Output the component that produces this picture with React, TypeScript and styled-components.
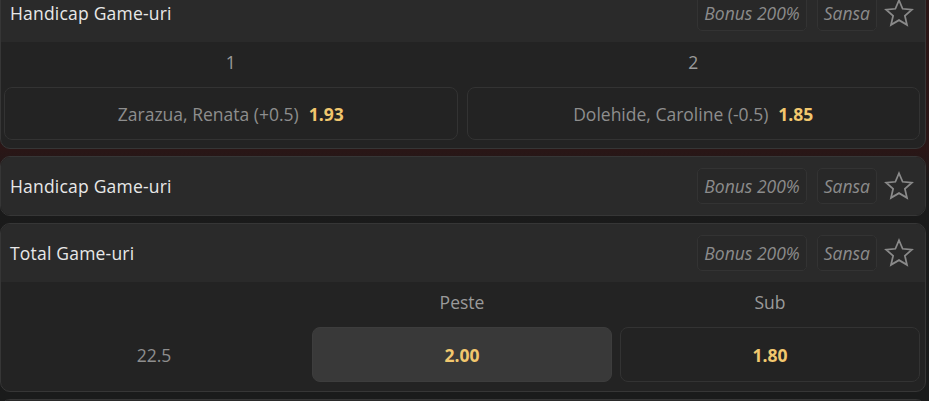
import React from "react";
import styled, { createGlobalStyle } from "styled-components";

const Global = createGlobalStyle`
  html, body { margin: 0; padding: 0; }
  body {
    background: linear-gradient(180deg, #2a1515 0px, #2a1616 150px, #1a1a1a 185px, #1a1b1b 100%);
    font-family: "Open Sans", "Noto Sans", Arial, sans-serif;
    overflow: hidden;
  }
`;

const Page = styled.div`
  width: 929px;
  height: 401px;
  overflow: hidden;
`;

const List = styled.div`
  display: flex;
  flex-direction: column;
  gap: 7px;
  margin-top: -17px;
  width: 926px;
`;

const Card = styled.section`
  border: 1px solid #363636;
  border-radius: 10px;
  background: #232323;
  overflow: hidden;
`;

const Header = styled.header`
  height: 58px;
  display: flex;
  align-items: center;
  padding: 0 10px 0 9px;
  background: #2a2a2a;
`;

const Title = styled.h3`
  margin: 0;
  flex: 1;
  font-size: 17.5px;
  font-weight: 400;
  color: #e8e8e8;
  letter-spacing: 0.2px;
`;

const Tag = styled.span`
  height: 36px;
  box-sizing: border-box;
  display: inline-flex;
  align-items: center;
  padding: 0 6px;
  border: 1px solid #333;
  border-radius: 5px;
  background: #282828;
  color: #8c8c8c;
  font-style: italic;
  font-size: 17.5px;
  margin-left: 10px;
`;

const StarBox = styled.span`
  width: 32px;
  height: 32px;
  margin-left: 6px;
  display: inline-flex;
  align-items: center;
  justify-content: center;
`;

const Body = styled.div<{ $bottom: number }>`
  padding: 0 5px ${(p) => p.$bottom}px 3px;
`;

const Grid = styled.div<{ $cols: number; $gap: number }>`
  display: grid;
  grid-template-columns: repeat(${(p) => p.$cols}, 1fr);
  column-gap: ${(p) => p.$gap}px;
`;

const Label = styled.div`
  height: 40px;
  margin-bottom: 5px;
  display: flex;
  align-items: center;
  justify-content: center;
  color: #9a9a9a;
  font-size: 17.5px;
`;

const Odd = styled.button<{ $active?: boolean; $h: number }>`
  height: ${(p) => p.$h}px;
  border-radius: 8px;
  border: 1px solid ${(p) => (p.$active ? "#3d3d3d" : "#333")};
  background: ${(p) => (p.$active ? "#393939" : "#232323")};
  display: flex;
  align-items: center;
  justify-content: center;
  gap: 10px;
  font-family: inherit;
  font-size: 17.5px;
  color: #8e8e8e;
  padding: 0;
`;

const Plain = styled.div<{ $h: number }>`
  height: ${(p) => p.$h}px;
  display: flex;
  align-items: center;
  justify-content: center;
  color: #8e8e8e;
  font-size: 17.5px;
`;

const Price = styled.span`
  color: #f1c76e;
  font-weight: 700;
`;

const Star = () => (
  <svg width="30" height="30" viewBox="0 0 24 24" fill="none" stroke="#8a8a8a" strokeWidth="1.4" strokeLinejoin="miter">
    <polygon points="12,1.8 14.9,8.6 22.3,9.3 16.7,14.2 18.4,21.5 12,17.7 5.6,21.5 7.3,14.2 1.7,9.3 9.1,8.6" />
  </svg>
);

const CardHeader = ({ title }: { title?: string }) => (
  <Header>
    <Title>{title}</Title>
    {title && (
      <>
        <Tag>Bonus 200%</Tag>
        <Tag>Sansa</Tag>
        <StarBox>
          <Star />
        </StarBox>
      </>
    )}
  </Header>
);

export default function App() {
  return (
    <Page>
      <Global />
      <List>
        <Card>
          <CardHeader title="Handicap Game-uri" />
          <Body $bottom={8}>
            <Grid $cols={2} $gap={9}>
              <Label>1</Label>
              <Label>2</Label>
              <Odd $h={53}>
                <span>Zarazua, Renata (+0.5)</span>
                <Price>1.93</Price>
              </Odd>
              <Odd $h={53}>
                <span>Dolehide, Caroline (-0.5)</span>
                <Price>1.85</Price>
              </Odd>
            </Grid>
          </Body>
        </Card>
        <Card>
          <CardHeader title="Handicap Game-uri" />
        </Card>
        <Card>
          <CardHeader title="Total Game-uri" />
          <Body $bottom={9}>
            <Grid $cols={3} $gap={8}>
              <Label />
              <Label>Peste</Label>
              <Label>Sub</Label>
              <Plain $h={55}>22.5</Plain>
              <Odd $h={55} $active>
                <Price>2.00</Price>
              </Odd>
              <Odd $h={55}>
                <Price>1.80</Price>
              </Odd>
            </Grid>
          </Body>
        </Card>
        <Card>
          <CardHeader />
        </Card>
      </List>
    </Page>
  );
}
